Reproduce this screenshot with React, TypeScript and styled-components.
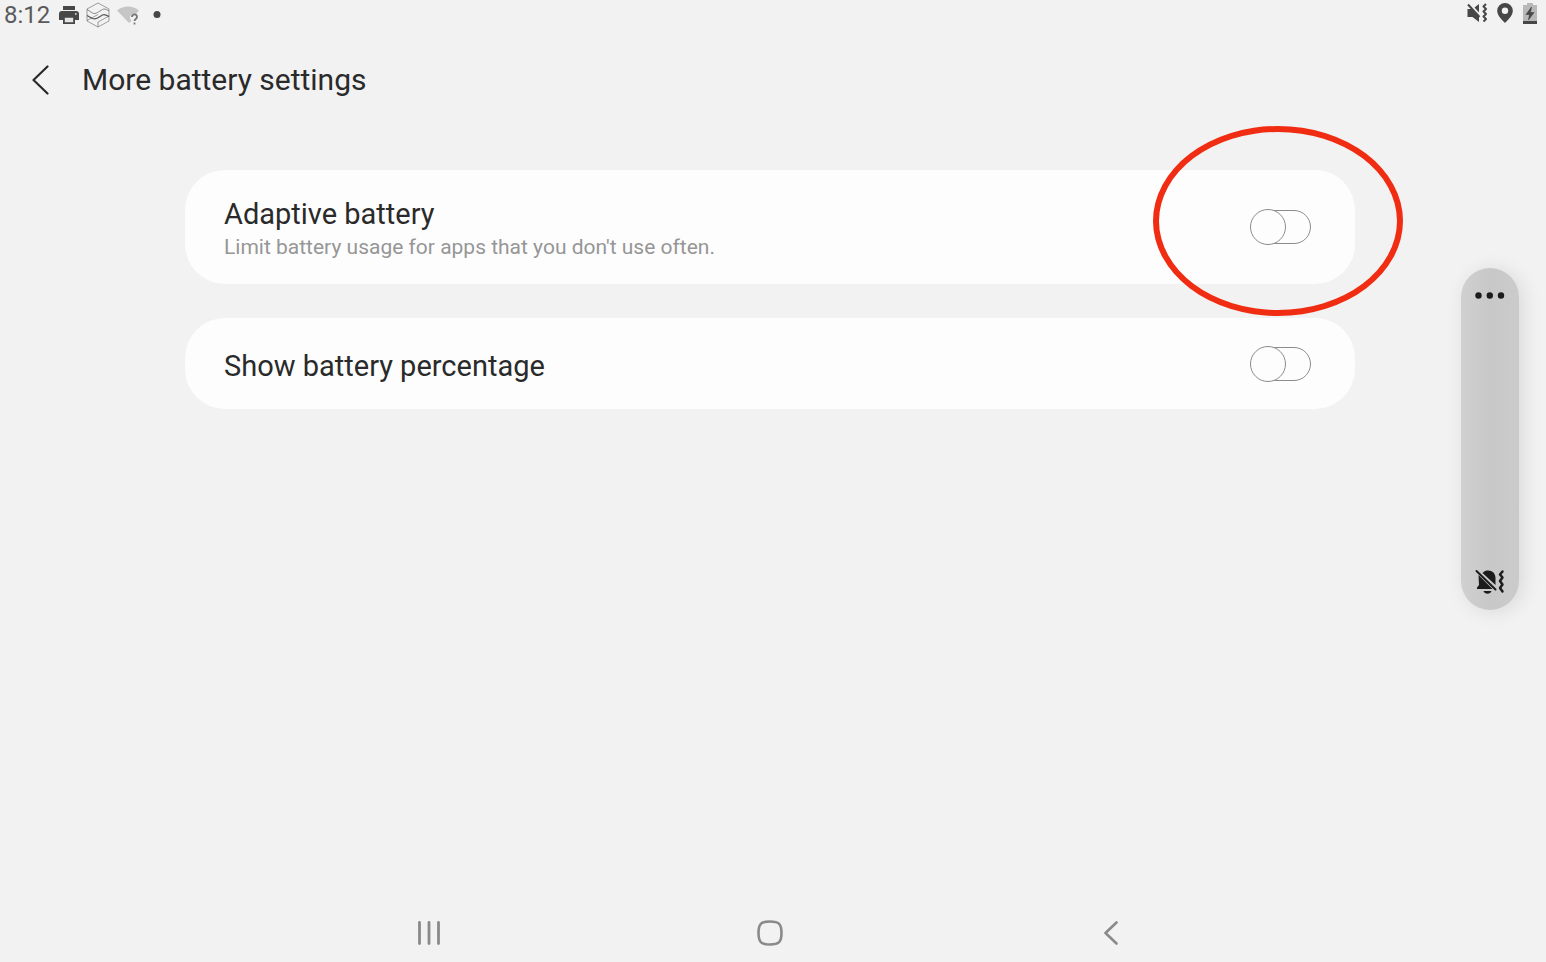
import { useState, type ReactNode } from "react";
import styled, { createGlobalStyle } from "styled-components";

const GlobalStyle = createGlobalStyle`
  *, *::before, *::after { box-sizing: border-box; }
  body {
    margin: 0;
    background: #f2f2f2;
    color: #2a2a2a;
    font-family: Roboto, "Noto Sans", sans-serif;
  }
  button { padding: 0; border: 0; background: none; color: inherit; font: inherit; cursor: pointer; }
  svg { display: block; }
`;

const Screen = styled.div`
  position: relative;
  display: flex;
  flex-direction: column;
  min-height: 100vh;
`;

const StatusBar = styled.div`
  display: flex;
  justify-content: space-between;
  align-items: flex-start;
  height: 32px;
  padding: 0 9px 0 4px;
  color: #474747;
`;

const Notifications = styled.div`
  display: flex;
  align-items: center;
  gap: 7px;
`;

const SystemStatus = styled.div`
  display: flex;
  align-items: center;
  gap: 10px;
  padding-top: 2px;
`;

const Clock = styled.time`
  margin-right: 2px;
  font-size: 24px;
  line-height: 30px;
  color: #5a5a5a;
`;

const AppBar = styled.header`
  display: flex;
  align-items: center;
  gap: 18px;
  height: 96px;
  padding: 0 16px;
`;

const IconButton = styled.button`
  display: grid;
  place-items: center;
  width: 48px;
  height: 48px;
`;

const Title = styled.h1`
  margin: 0;
  font-size: 30px;
  line-height: 40px;
  font-weight: 400;
`;

const Settings = styled.main`
  display: flex;
  flex: 1;
  flex-direction: column;
  gap: 34px;
  padding: 42px 191px 32px 185px;
`;

const Card = styled.section<{ $tall?: boolean }>`
  display: flex;
  align-items: center;
  justify-content: space-between;
  gap: 24px;
  min-height: ${(p) => (p.$tall ? 114 : 91)}px;
  padding: 0 44px 0 39px;
  border-radius: 40px;
  background: #fdfdfd;
`;

const CardText = styled.div`
  display: flex;
  flex-direction: column;
  padding-top: 4px;
`;

const CardLabel = styled.label`
  font-size: 29px;
  line-height: 36px;
`;

const CardNote = styled.p`
  margin: 0;
  font-size: 21px;
  line-height: 30px;
  color: #969696;
`;

const SwitchSlot = styled.div`
  position: relative;
  flex: none;
`;

const Switch = styled.input`
  display: grid;
  align-items: center;
  width: 61px;
  height: 36px;
  margin: 0;
  appearance: none;
  cursor: pointer;

  &::before, &::after {
    content: "";
    grid-area: 1 / 1;
    border: 1px solid #8c8c8c;
    background: #fdfdfd;
  }
  &::before { height: 34px; margin-left: 2px; border-radius: 17px; }
  &::after { width: 36px; height: 36px; border-radius: 50%; }
  &:checked::before { background: #3e91ff; }
  &:checked::after { justify-self: end; }
`;

const Highlight = styled.div`
  position: absolute;
  top: -83px;
  left: -97px;
  z-index: 1;
  width: 250px;
  height: 190px;
  border: 6px solid #f02d12;
  border-radius: 50%;
  pointer-events: none;
`;

const VolumePanel = styled.aside`
  position: absolute;
  top: 268px;
  right: 27px;
  display: flex;
  flex-direction: column;
  align-items: center;
  justify-content: space-between;
  width: 58px;
  height: 342px;
  padding: 4px 0;
  border-radius: 29px;
  background: linear-gradient(90deg, #d0d0d0, #c8c8c8 50%, #cbcbcb);
  box-shadow: 4px 2px 20px rgba(0, 0, 0, 0.1);
  color: #1c1c1c;
`;

const NavBar = styled.nav`
  display: grid;
  grid-template-columns: repeat(3, minmax(0, 341px));
  justify-content: center;
  justify-items: center;
  padding: 0 6px 5px 0;
  color: #8a8a8a;
`;

const PrinterIcon = () => (
  <svg width="20" height="18" viewBox="0 0 20 18" fill="currentColor" aria-hidden="true">
    <path d="M4 0h12v4H4zM3 5h14a3 3 0 0 1 3 3v6h-4v-3H4v3H0V8a3 3 0 0 1 3-3z" />
    <path d="M4.900 10.900h10.200v6.200H4.900z" fill="#e4e4e4" stroke="currentColor" strokeWidth="1.800" />
    <circle cx="16.800" cy="8" r=".9" fill="#d9d9d9" />
  </svg>
);

const HexIcon = () => (
  <svg width="24" height="26" viewBox="0 0 24 26" fill="none" stroke="currentColor" strokeLinejoin="round" aria-hidden="true">
    <path d="M12 1 23 7v12l-11 6L1 19V7z" opacity=".5" />
    <path d="M1 7.500l5.500 3.500c2 1 3 .5 5-.5l5-3c2-1 3-.5 6.500 1.500" opacity=".6" />
    <path d="M1 13.500l5.500 3c2 1 3 .5 5-.5l5-3c2-1 3-.5 6.500 1.500" strokeWidth="1.300" opacity=".9" />
    <path d="M1 18.500l11-6M12 25V20l11-6" opacity=".5" />
  </svg>
);

const WifiUnknownIcon = () => (
  <svg width="22" height="19" viewBox="0 0 22 19" fill="none" aria-hidden="true">
    <path d="M0 4.500C6-1 16-1 22 4.500L19 8c-4-1-6 1-6 4l1.500 3L12 17z" fill="#c6c6c6" />
    <path d="M15 11c0-3.500 5-3.500 5 0 0 2-2.500 2-2.500 4M17.500 16.500v2" stroke="#777" strokeWidth="1.800" />
  </svg>
);

const MoreNotificationsIcon = () => (
  <svg width="20" height="8" viewBox="0 0 20 8" aria-hidden="true">
    <circle cx="11" cy="3.500" r="3.500" fill="currentColor" />
  </svg>
);

const MutedVibrateIcon = () => (
  <svg width="21" height="22" viewBox="0 0 21 22" aria-hidden="true">
    <path d="M1.500 7H6l7 7.500V20l-6.500-5h-5zM8.500 5.500 13 2v8.500z" fill="currentColor" />
    <path d="M2 2.500 13.500 15" stroke="currentColor" strokeWidth="2" />
    <path d="M20 2 17.500 4.500 20 7l-2.500 2.500L20 12l-2.500 2.500L20 17l-2.500 2.500" fill="none" stroke="currentColor" strokeWidth="2" strokeLinejoin="round" />
  </svg>
);

const LocationIcon = () => (
  <svg width="16" height="20" viewBox="0 0 16 20" aria-hidden="true">
    <path fillRule="evenodd" d="M8 0a7.800 7.800 0 0 1 7.800 7.800c0 5-4.800 9-7.800 12.200C5 16.800.2 12.800.2 7.800A7.800 7.800 0 0 1 8 0zm0 4.500a3.200 3.200 0 1 0 0 6.400 3.200 3.200 0 0 0 0-6.400z" fill="currentColor" />
  </svg>
);

const BatteryIcon = () => (
  <svg width="14" height="21" viewBox="0 0 14 21" aria-hidden="true">
    <path d="M4 0h6v2h4v19H0V2h4z" fill="#b8b8b8" />
    <path d="M0 18h14v3H0z" fill="currentColor" />
    <path d="M8.500 4 3 11.500h3.500L5.500 17 11 9.500H7.500z" fill="currentColor" stroke="currentColor" strokeWidth=".6" />
  </svg>
);

const BackIcon = () => (
  <svg width="18" height="32" viewBox="0 0 18 32" fill="none" stroke="currentColor" strokeWidth="2.200" strokeLinecap="round" strokeLinejoin="round" aria-hidden="true">
    <path d="M16.500 2.500 2.500 16l14 13.500" />
  </svg>
);

const MoreIcon = () => (
  <svg width="30" height="8" viewBox="0 0 30 8" fill="currentColor" aria-hidden="true">
    <circle cx="3.500" cy="3.500" r="3.200" />
    <circle cx="14.800" cy="3.500" r="3.200" />
    <circle cx="26" cy="3.500" r="3.200" />
  </svg>
);

const BellOffVibrateIcon = () => (
  <svg width="30" height="26" viewBox="0 0 30 26" fill="none" aria-hidden="true">
    <path d="M3.500 6 17.500 20H2v-1.500l2-2.500zM7.500 4C9.500 2 11 1.500 13 1.500c4.500 0 7.500 3 7.500 7.500v7z" fill="currentColor" />
    <path d="M1.500 2 20.500 20.500" stroke="currentColor" strokeWidth="2" strokeLinecap="round" />
    <path d="M8.500 22h8c-1 3.600-7 3.600-8 0z" fill="currentColor" />
    <path d="M27.500 2.500 25 5.500l2.500 3-2.500 3.500 2.500 3.500L25 19l2.500 3.500" stroke="currentColor" strokeWidth="2.500" strokeLinecap="round" strokeLinejoin="round" />
  </svg>
);

const RecentsIcon = () => (
  <svg width="24" height="24" viewBox="0 0 24 24" stroke="currentColor" strokeWidth="2.800" strokeLinecap="round" aria-hidden="true">
    <path d="M2.500 1.500v21M12 1.500v21M21.500 1.500v21" />
  </svg>
);

const HomeIcon = () => (
  <svg width="26" height="26" viewBox="0 0 26 26" fill="none" stroke="currentColor" strokeWidth="2.600" aria-hidden="true">
    <path d="M13 1.500c9 0 11.500 2.500 11.500 11.500S22 24.500 13 24.500 1.500 22 1.500 13 4 1.500 13 1.500z" />
  </svg>
);

const NavBackIcon = () => (
  <svg width="14" height="24" viewBox="0 0 14 24" fill="none" stroke="currentColor" strokeWidth="2.600" strokeLinecap="round" strokeLinejoin="round" aria-hidden="true">
    <path d="M12.500 1.500 1.500 12l11 10.500" />
  </svg>
);

interface SettingProps {
  id: string;
  label: string;
  note?: string;
  children?: ReactNode;
}

function Setting({ id, label, note, children }: SettingProps) {
  const [on, setOn] = useState(false);
  return (
    <Card $tall={Boolean(note)}>
      <CardText>
        <CardLabel htmlFor={id}>{label}</CardLabel>
        {note && <CardNote id={`${id}-note`}>{note}</CardNote>}
      </CardText>
      <SwitchSlot>
        <Switch
          id={id}
          type="checkbox"
          role="switch"
          checked={on}
          aria-describedby={note ? `${id}-note` : undefined}
          onChange={(e) => setOn(e.target.checked)}
        />
        {children}
      </SwitchSlot>
    </Card>
  );
}

export default function App() {
  return (
    <Screen>
      <GlobalStyle />
      <StatusBar>
        <Notifications>
          <Clock>8:12</Clock>
          <PrinterIcon />
          <HexIcon />
          <WifiUnknownIcon />
          <MoreNotificationsIcon />
        </Notifications>
        <SystemStatus>
          <MutedVibrateIcon />
          <LocationIcon />
          <BatteryIcon />
        </SystemStatus>
      </StatusBar>
      <AppBar>
        <IconButton type="button" aria-label="Navigate up">
          <BackIcon />
        </IconButton>
        <Title>More battery settings</Title>
      </AppBar>
      <Settings>
        <Setting
          id="adaptive-battery"
          label="Adaptive battery"
          note="Limit battery usage for apps that you don't use often."
        >
          <Highlight />
        </Setting>
        <Setting id="battery-percentage" label="Show battery percentage" />
      </Settings>
      <VolumePanel aria-label="Volume">
        <IconButton type="button" aria-label="More volume options">
          <MoreIcon />
        </IconButton>
        <IconButton type="button" aria-label="Sound mode: vibrate">
          <BellOffVibrateIcon />
        </IconButton>
      </VolumePanel>
      <NavBar aria-label="System">
        <IconButton type="button" aria-label="Recent apps">
          <RecentsIcon />
        </IconButton>
        <IconButton type="button" aria-label="Home">
          <HomeIcon />
        </IconButton>
        <IconButton type="button" aria-label="Back">
          <NavBackIcon />
        </IconButton>
      </NavBar>
    </Screen>
  );
}
